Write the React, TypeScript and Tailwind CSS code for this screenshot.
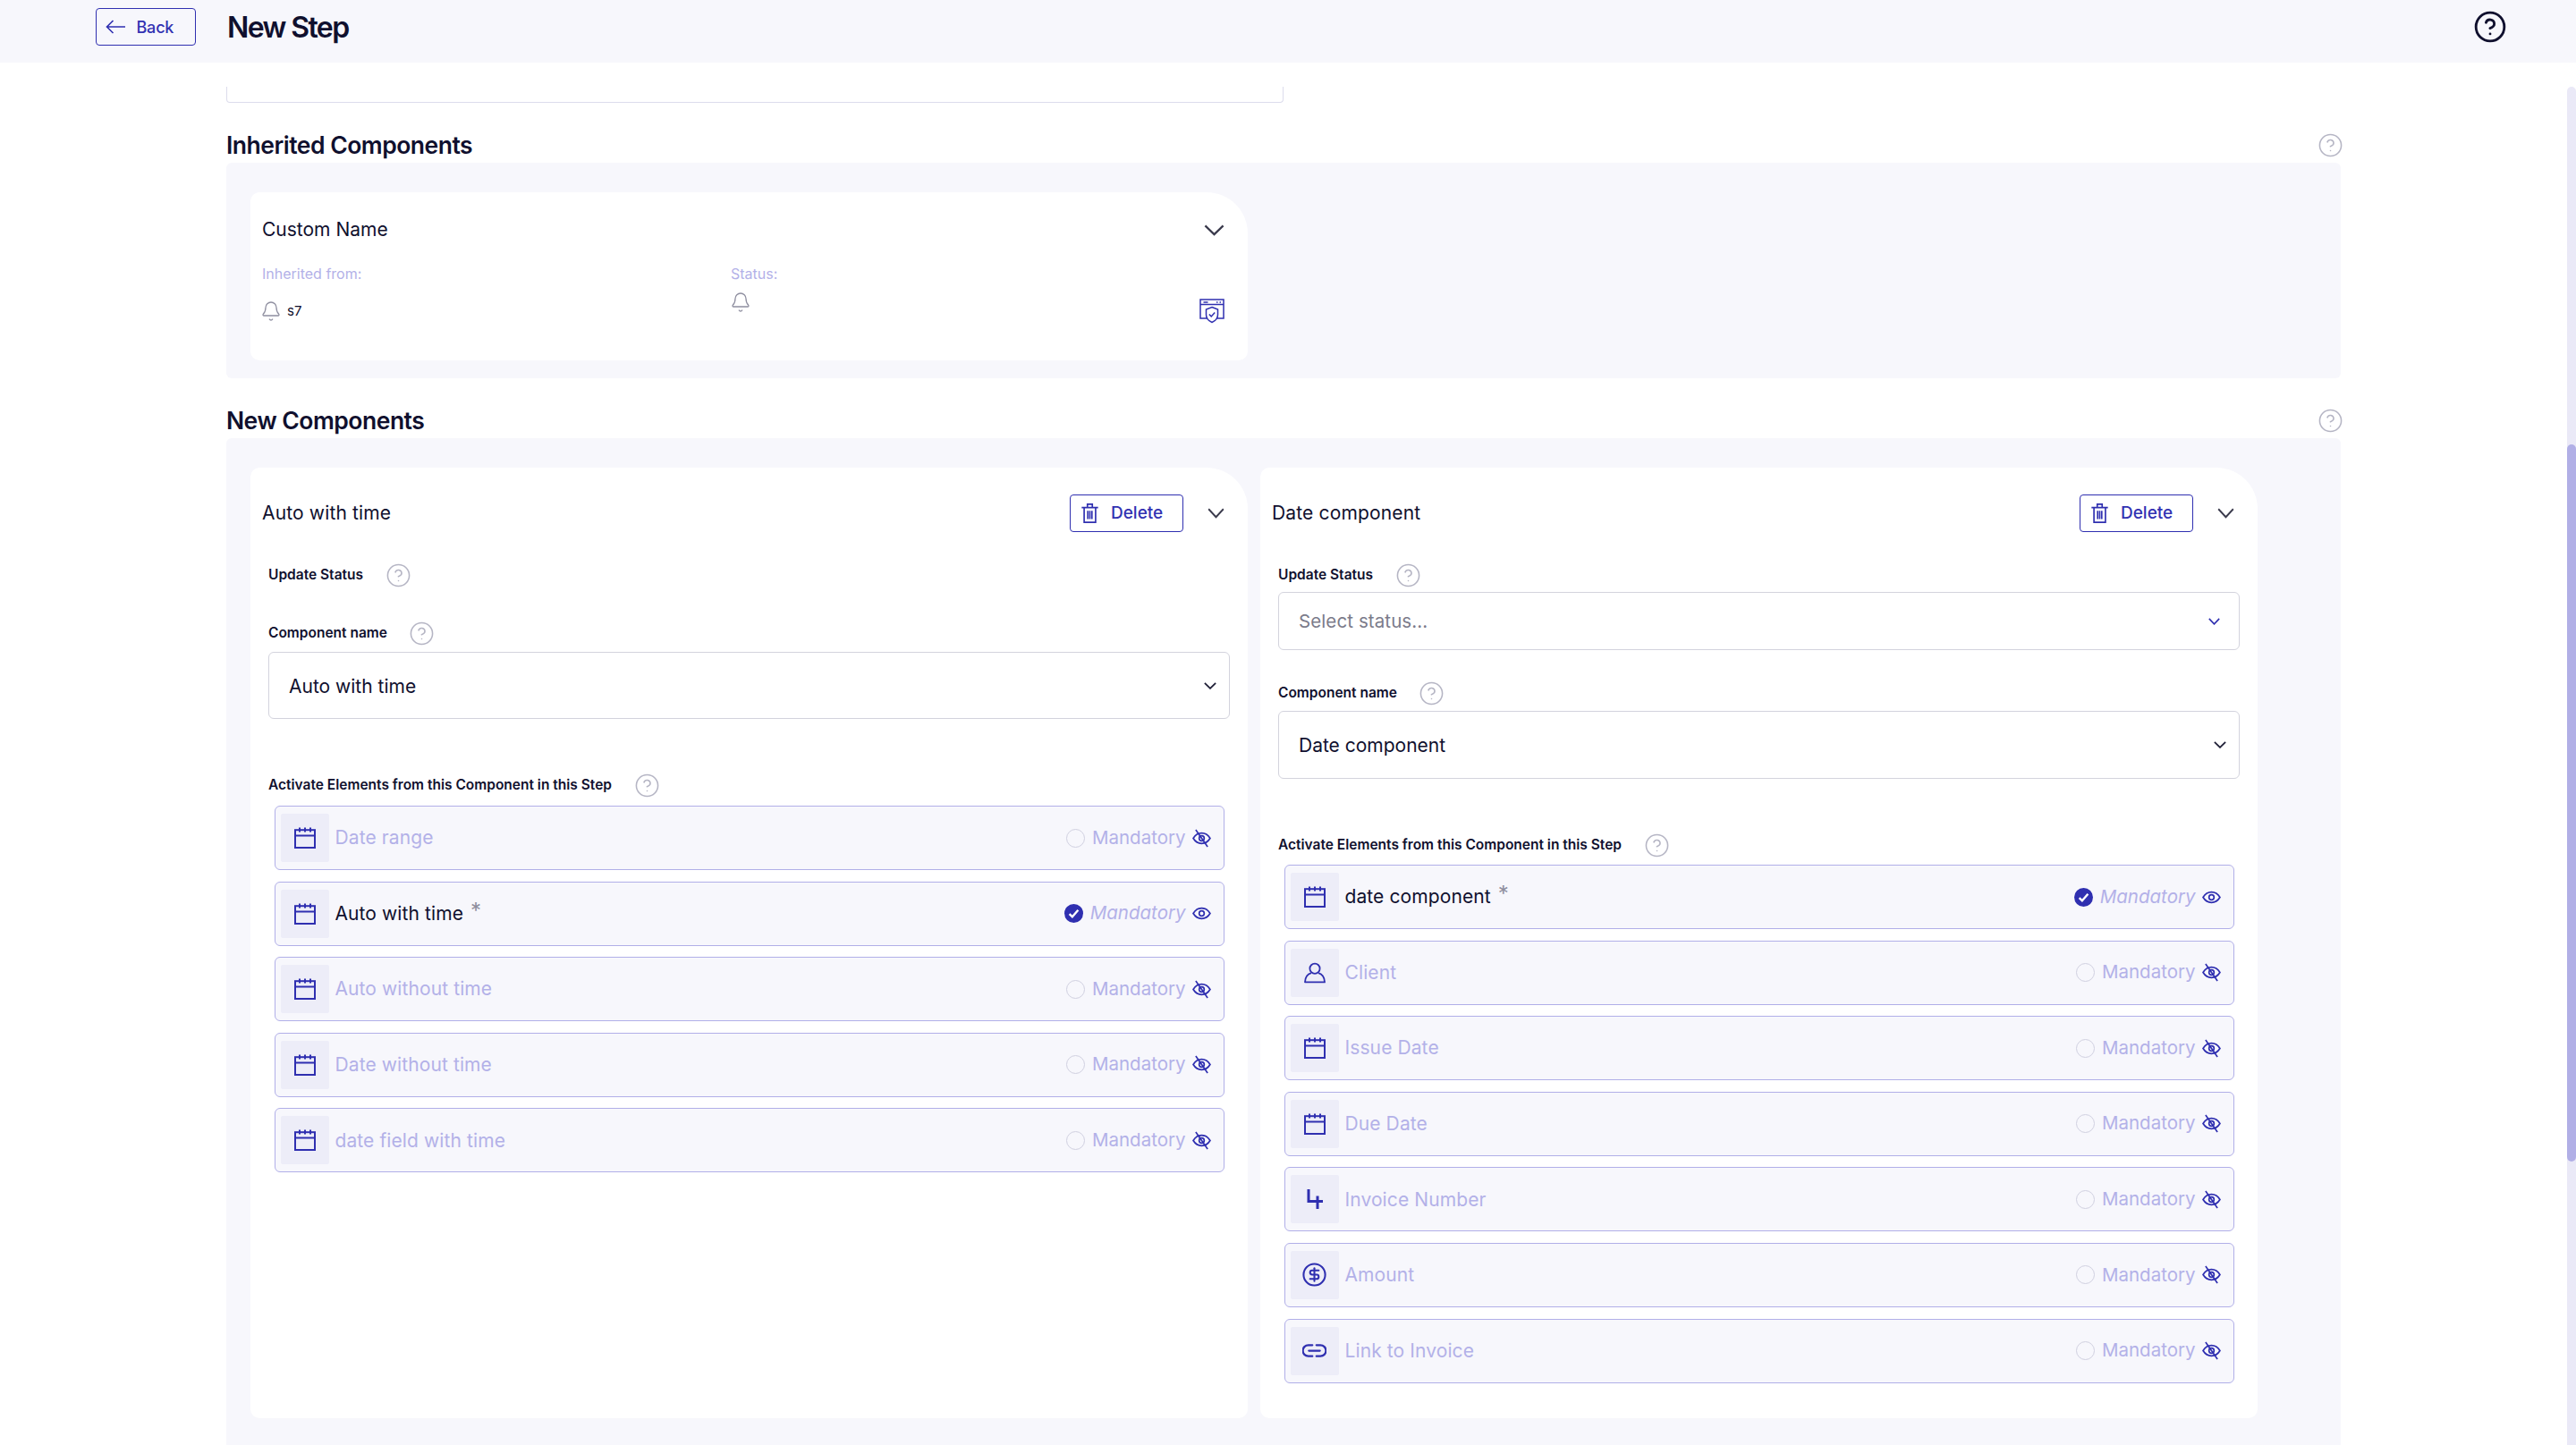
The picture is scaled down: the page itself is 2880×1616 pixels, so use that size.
import { Bell, CircleDollarSign, CircleHelp } from 'lucide-react'

const ink = 'text-[#10102e]'

function Chevron({ className, stroke = '#3a3a4c', weight = 2.4 }: { className: string; stroke?: string; weight?: number }) {
  return (
    <svg viewBox="0 0 24 14" preserveAspectRatio="none" className={`shrink-0 ${className}`} fill="none" stroke={stroke} strokeWidth={weight}>
      <path d="M1.500 1.500L12 12l10.500-10.500" />
    </svg>
  )
}

function CalendarIcon() {
  return (
    <svg viewBox="0 0 24 24" className="w-6 h-6" fill="none" stroke="#2f2fb0" strokeWidth="2">
      <rect x="1" y="3.200" width="22" height="19.800" />
      <path d="M1 9.500h22M6 0.600v5M12 0.600v5M18 0.600v5" />
    </svg>
  )
}

function PersonIcon() {
  return (
    <svg viewBox="0 0 24 24" className="w-6 h-6" fill="none" stroke="#2f2fb0" strokeWidth="1.800">
      <circle cx="12" cy="7.200" r="5.600" />
      <path d="M8 12.200C3.500 13.600 1.200 17 1 22.400h22c-.2-5.400-2.500-8.800-7-10.200" strokeLinejoin="round" />
    </svg>
  )
}

function NumberIcon() {
  return (
    <svg viewBox="0 0 24 24" className="w-6 h-6" fill="none" stroke="#2f2fb0" strokeWidth="3">
      <path d="M5 1v13.500h16M15 8.500V23" />
    </svg>
  )
}

function LinkIcon() {
  return (
    <svg viewBox="0 0 24 24" className="w-[27px] h-[27px]" fill="none" stroke="#2f2fb0" strokeWidth="2">
      <path d="M10 6.500H6a5.500 5.500 0 0 0 0 11h4M14 6.500h4a5.500 5.500 0 0 1 0 11h-4M6.500 12h11" strokeLinecap="round" />
    </svg>
  )
}

function EyeIcon({ off }: { off?: boolean }) {
  return (
    <svg viewBox="0 0 22 18" className="w-[21px] h-[17px] shrink-0 overflow-visible" fill="none" stroke="#2f2fb0" strokeWidth="1.800">
      <path d="M1 9c2.600-4.200 6-6.200 10-6.200S18.400 4.800 21 9c-2.600 4.200-6 6.200-10 6.200S3.600 13.200 1 9Z" />
      <circle cx="11" cy="9" r="3" />
      {off && <path d="M4 -1l14 20" />}
    </svg>
  )
}

function TrashIcon() {
  return (
    <svg viewBox="0 0 20 24" className="w-[19px] h-[22px]" fill="none" stroke="#2f2fb0" strokeWidth="1.800">
      <path d="M0 5h20M3 5v18h14V5M7 5V1h6v4M7.500 9v10M10 9v10M12.500 9v10" />
    </svg>
  )
}

function ShieldWindowIcon() {
  return (
    <svg viewBox="0 0 28 28" className="w-[28px] h-[28px]" fill="none" stroke="#2f2fb0" strokeWidth="1.500">
      <path d="M8 22H1V1h26v21h-7" />
      <path d="M1 6.500h26M4.500 4h5M19 4h1.500M22.500 4h1.500" />
      <path d="M14 9.500l6.500 2.500v6c0 4-3 7-6.500 8.500C10.500 25 7.500 22 7.500 18v-6L14 9.500Z" fill="#fff" />
      <path d="M10.800 17.500l2.400 2.400 4-4.400" />
    </svg>
  )
}

function Help() {
  return <CircleHelp className="w-[29px] h-[29px] -m-[2.500px] text-[#b5b5c4] shrink-0" strokeWidth={1.300} />
}

function SelectBox({ text, height, mute }: { text: string; height: string; mute?: boolean }) {
  return (
    <div className={`${height} flex items-center justify-between border-[1.5px] border-[#d3d3dd] rounded-[6px] pl-[22px] ${mute ? 'pr-[21px]' : 'pr-[14px]'}`}>
      <span className={mute ? 'pt-[2px] text-[20.5px] tracking-[0.1px] text-[#7b7b8a]' : `pt-[2px] text-[21px] ${ink}`}>{text}</span>
      {mute ? (
        <Chevron className="w-[13px] h-[8px]" stroke="#2f2fb0" weight={3} />
      ) : (
        <Chevron className="w-[14px] h-[8px]" stroke="#1c1c34" weight={3} />
      )}
    </div>
  )
}

type Field = { label: string; icon: React.ReactNode; active?: boolean }

function FieldRow({ label, icon, active }: Field) {
  return (
    <div className="h-[72px] flex items-center pl-[5.5px] pr-[14.5px] bg-[#f7f7fc] border-[1.5px] border-[#b1afe8] rounded-[6px]">
      <div className="w-[54px] h-[54px] flex items-center justify-center bg-[#ededf8] rounded-[2px]">{icon}</div>
      <span className={`ml-[7px] text-[21px] tracking-[0.1px] ${active ? ink : 'text-[#b3b1e8]'}`}>
        {label}
        {active && <span className="ml-[8px] text-[24px] leading-none align-[2px] text-[#8e8e9e]">*</span>}
      </span>
      {active ? (
        <span className="ml-auto w-[21px] h-[21px] flex items-center justify-center rounded-full bg-[#2f2fb0]">
          <svg viewBox="0 0 12 12" className="w-[13px] h-[13px]" fill="none" stroke="#fff" strokeWidth="2.200">
            <path d="M1.500 6.500l3 3 6-7" />
          </svg>
        </span>
      ) : (
        <span className="ml-auto w-[21px] h-[21px] rounded-full border-[1.5px] border-[#d0d0e0]" />
      )}
      <span className={`ml-[8px] mr-[7px] text-[20.5px] text-[#b3b1e8] ${active ? 'italic' : ''}`}>Mandatory</span>
      <EyeIcon off={!active} />
    </div>
  )
}

const calendar = <CalendarIcon />

const leftFields: Field[] = [
  { label: 'Date range', icon: calendar },
  { label: 'Auto with time', icon: calendar, active: true },
  { label: 'Auto without time', icon: calendar },
  { label: 'Date without time', icon: calendar },
  { label: 'date field with time', icon: calendar },
]

const rightFields: Field[] = [
  { label: 'date component', icon: calendar, active: true },
  { label: 'Client', icon: <PersonIcon /> },
  { label: 'Issue Date', icon: calendar },
  { label: 'Due Date', icon: calendar },
  { label: 'Invoice Number', icon: <NumberIcon /> },
  { label: 'Amount', icon: <CircleDollarSign className="w-[29px] h-[29px] text-[#2f2fb0]" strokeWidth={1.700} /> },
  { label: 'Link to Invoice', icon: <LinkIcon /> },
]

function Label({ text }: { text: string }) {
  return (
    <div className="flex items-center h-6 gap-[27px]">
      <span className={`text-[15.5px] font-semibold ${ink}`}>{text}</span>
      <Help />
    </div>
  )
}

function ComponentCard({ title, fields, statusSelect }: { title: string; fields: Field[]; statusSelect?: boolean }) {
  return (
    <div className="bg-white rounded-[10px] rounded-tr-[46px] pt-[30px] pb-[39px] pl-[13px] pr-[26px]">
      <div className="h-[42px] flex items-center">
        <span className={`text-[21px] tracking-[0.15px] ${ink}`}>{title}</span>
        <button className="ml-auto w-[127px] h-[42px] flex items-center gap-[14px] pl-[12px] border-[1.5px] border-[#2f2fb0] rounded-[4px] text-[#3232b2] text-[19px] font-medium">
          <TrashIcon />
          Delete
        </button>
        <Chevron className="ml-[27px] w-[19px] h-[12px]" />
      </div>
      <div className="pl-[7px] -mr-[6px] mt-[36px]">
        <Label text="Update Status" />
        {statusSelect && (
          <div className="mt-[7px]">
            <SelectBox text="Select status..." height="h-[65px]" mute />
          </div>
        )}
        <div className={statusSelect ? 'mt-[36px]' : 'mt-[41px]'}>
          <Label text="Component name" />
        </div>
        <div className={statusSelect ? 'mt-[8px]' : 'mt-[9px]'}>
          <SelectBox text={title} height={statusSelect ? 'h-[76px]' : 'h-[75px]'} />
        </div>
        <div className="mt-[62px]">
          <Label text="Activate Elements from this Component in this Step" />
        </div>
      </div>
      <div className={`${statusSelect ? 'mt-[10px]' : 'mt-[11px]'} ml-[14px] flex flex-col gap-[12.6px]`}>
        {fields.map((f) => (
          <FieldRow key={f.label} {...f} />
        ))}
      </div>
    </div>
  )
}

function SectionTitle({ text }: { text: string }) {
  return (
    <div className="h-[40px] flex items-center justify-between">
      <h2 className={`pt-[1px] text-[26.5px] font-semibold tracking-[-0.5px] ${ink}`}>{text}</h2>
      <Help />
    </div>
  )
}

export default function App() {
  return (
    <div className="h-[1616px] w-[2880px] overflow-hidden flex flex-col bg-white font-['Inter',sans-serif]">
      <header className="h-[70px] shrink-0 bg-[#f7f7fc] flex items-center pb-[10px] pl-[107px] pr-[77px]">
        <button className="w-[112px] h-[42px] flex items-center gap-[13px] pl-[9.5px] border-[1.5px] border-[#2f2fb0] rounded-[4px] text-[#3232b2] text-[18px] tracking-[-0.2px] font-medium">
          <svg viewBox="0 0 22 16" className="w-[22px] h-[16px]" fill="none" stroke="#2f2fb0" strokeWidth="1.600">
            <path d="M22 8H1.500M8.500 1L1.500 8l7 7" />
          </svg>
          Back
        </button>
        <h1 className={`ml-[35px] pt-[2px] text-[32px] font-semibold tracking-[-1.6px] ${ink}`}>New Step</h1>
        <CircleHelp className={`ml-auto w-[38px] h-[38px] ${ink}`} strokeWidth={1.800} />
      </header>

      <div className="flex-1 flex min-h-0">
        <main className="flex-1 min-w-0 overflow-hidden pt-[27px] pl-[253px] pr-[253px]">
          <div className="w-[1182px] h-[18px] border-x-[1.5px] border-b-[1.5px] border-[#dcdcec] rounded-b-[4px]" />

          <div className="mt-[27px]">
            <SectionTitle text="Inherited Components" />
          </div>
          <section className="bg-[#f7f7fc] rounded-[6px] pt-[33px] pb-[20px] pl-[27px]">
            <div className="w-[1115px] h-[188px] bg-white rounded-[10px] rounded-tr-[46px] pl-[13px] pr-[26px] pt-[24px]">
              <div className="h-[36px] flex items-center justify-between">
                <span className={`text-[21px] ${ink}`}>Custom Name</span>
                <Chevron className="w-[23px] h-[13px]" />
              </div>
              <div className="mt-[20px] flex">
                <div className="w-[524px]">
                  <div className="text-[16px] leading-[22px] text-[#b3b1e8]">Inherited from:</div>
                  <div className="mt-[19px] flex items-center gap-[6px] -ml-[2px]">
                    <Bell className="w-6 h-6 text-[#8f8fa0]" strokeWidth={1.300} />
                    <span className={`text-[15px] ${ink}`}>s7</span>
                  </div>
                </div>
                <div className="flex-1">
                  <div className="text-[16px] leading-[22px] text-[#b3b1e8]">Status:</div>
                  <Bell className="mt-[9px] -ml-[1px] w-6 h-6 text-[#8f8fa0]" strokeWidth={1.300} />
                </div>
                <div className="mt-[39px]">
                  <ShieldWindowIcon />
                </div>
              </div>
            </div>
          </section>

          <div className="mt-[27px]">
            <SectionTitle text="New Components" />
          </div>
          <section className="bg-[#f7f7fc] rounded-[6px] pt-[33px] pb-[40px] pl-[27px] grid grid-cols-[1115px_1115px] gap-x-[14px]">
            <ComponentCard title="Auto with time" fields={leftFields} />
            <ComponentCard title="Date component" fields={rightFields} statusSelect />
          </section>
        </main>

        <div className="w-[10px] shrink-0 mt-[27px] bg-[#eae9f7] rounded-t-[5px]">
          <div className="mt-[400px] h-[802px] bg-[#b1afe6] rounded-[5px]" />
        </div>
      </div>
    </div>
  )
}
